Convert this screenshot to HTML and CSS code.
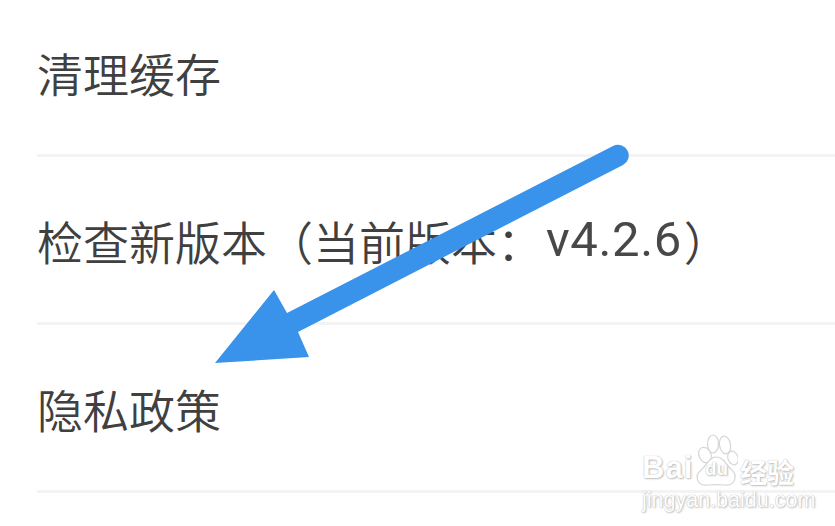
FILE: index.html
```html
<!DOCTYPE html>
<html lang="zh-CN">
<head>
<meta charset="utf-8">
<title>设置</title>
<link rel="stylesheet" href="styles.css">
</head>
<body>
<main class="page">
  <ul class="list">
    <li class="row">清理缓存</li>
    <li class="row">检查新版本<span class="paren">（</span>当前版本：<span class="ver">v4.2.6</span><span class="paren paren-close">）</span></li>
    <li class="row">隐私政策</li>
  </ul>
  <svg class="arrow" width="835" height="526" viewBox="0 0 835 526" aria-hidden="true">
    <path d="M613 146 L287 313 L274 290 L215 363 L309 357 L298 332 L623 165 A10.7 10.7 0 0 0 613 146Z" fill="#3993ea"/>
  </svg>
  <div class="mark">
    <div class="mark-top">
      <span class="mark-word">Bai</span>
      <svg class="paw" width="44" height="58" viewBox="0 0 44 58" aria-hidden="true">
        <g fill="#fff" stroke="#d6d6d6" stroke-width="1.2">
          <ellipse cx="11" cy="22" rx="6" ry="8" transform="rotate(-25 11 22)"/>
          <ellipse cx="19" cy="11" rx="5.5" ry="9"/>
          <ellipse cx="31" cy="12" rx="5.5" ry="9" transform="rotate(-10 31 12)"/>
          <ellipse cx="39" cy="25" rx="5" ry="7" transform="rotate(-20 39 25)"/>
          <path d="M22 24C30 24 32 32 38 37C44 43 41 53 31 52C26 51.500 20 51.500 13 52C3 53 0 43 7 37C13 32 15 24 22 24Z"/>
        </g>
      </svg>
      <span class="mark-du">du</span>
      <span class="mark-cn">经验</span>
    </div>
    <div class="mark-url">jingyan.baidu.com</div>
  </div>
</main>
</body>
</html>
```
FILE: styles.css
```css
* { box-sizing: border-box; }
html, body { margin: 0; height: 100%; background: #fff; }
.page {
  position: relative;
  width: 835px;
  height: 526px;
  overflow: hidden;
  font-family: "Noto Sans CJK SC", "Noto Sans", sans-serif;
}
.list {
  list-style: none;
  margin: -11px 0 0;
  padding: 0 0 0 37px;
}
.row {
  height: 168px;
  display: flex;
  align-items: center;
  border-bottom: 3px solid #f3f3f3;
  font-size: 46px;
  font-weight: 350;
  color: #404040;
  white-space: nowrap;
}
.paren { display: inline-block; }
.paren-close { margin-left: 2px; }
.ver { font-family: Roboto, sans-serif; font-size: 49px; font-weight: 400; margin-left: 3px; letter-spacing: 0.6px; color: #484848; }
.arrow { position: absolute; left: 0; top: 0; }
.mark {
  position: absolute;
  left: 642px;
  top: 434px;
  width: 160px;
  color: #fff;
  text-shadow: 0 0 1px #a8a8a8, 1px 1px 2px #c0c0c0;
  font-family: "Liberation Sans", sans-serif;
}
.mark-top { position: relative; display: flex; align-items: flex-end; height: 50px; }
.mark-word { font-size: 31px; font-weight: 700; line-height: 34px; width: 52px; letter-spacing: 1px; margin-bottom: -1px; }
.paw { position: absolute; left: 52px; top: -1px; }
.mark-du {
  position: absolute;
  left: 63px;
  top: 25px;
  font-size: 19px;
  font-weight: 700;
  line-height: 20px;
}
.mark-cn {
  position: absolute;
  left: 98px;
  top: 24px;
  font-family: "Noto Sans CJK SC", sans-serif;
  font-size: 27px;
  line-height: 28px;
  font-weight: 700;
}
.mark-url { font-size: 21.500px; line-height: 22px; margin-top: 5px; white-space: nowrap; }
```
